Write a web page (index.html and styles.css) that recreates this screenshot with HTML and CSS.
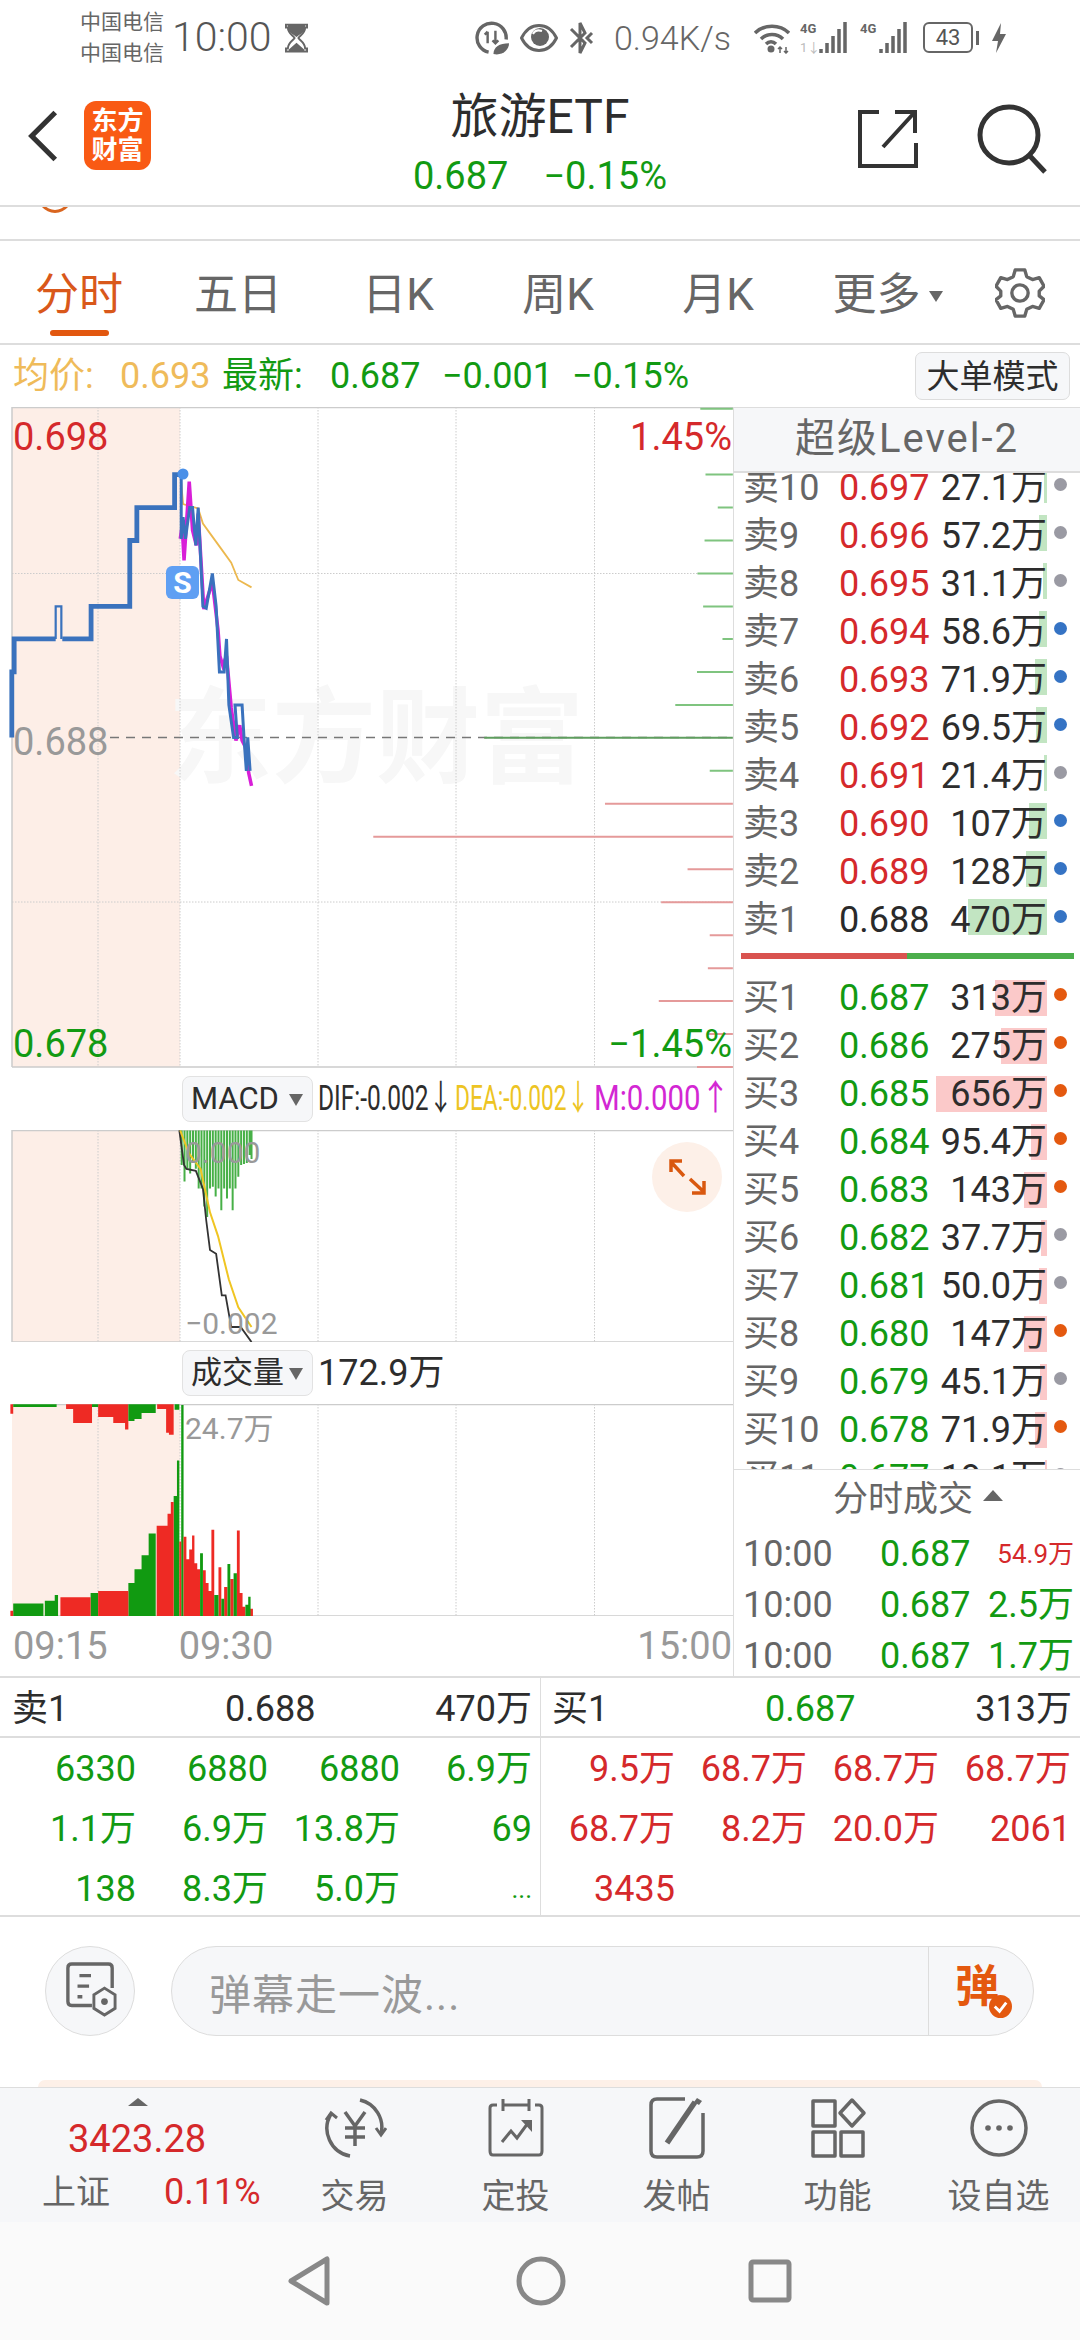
FILE: index.html
```html
<!DOCTYPE html>
<html lang="zh-CN">
<head>
<meta charset="utf-8">
<title>旅游ETF</title>
<link rel="stylesheet" href="styles.css">
</head>
<body>
<div class="page">
  <div class="status">
    <div class="carriers"><span>中国电信</span><span>中国电信</span></div>
    <span class="clock">10:00</span>
    <svg class="st-glass" viewBox="0 0 24 30"><path d="M1 1H23V4H21C21 10 16 12 14 15C16 18 21 20 21 26H23V29H1V26H3C3 20 8 18 10 15C8 12 3 10 3 4H1Z" fill="none" stroke="#666" stroke-width="2"/><path d="M3 1H21V6C19 10 15 11 12 14C9 11 5 10 3 6ZM12 20L20 27V29H4V27Z" fill="#666"/></svg>
    <div class="st-right">
      <svg class="st-i1" viewBox="0 0 36 36"><path d="M32 20A15 15 0 1 0 14 33" fill="none" stroke="#666" stroke-width="3.500"/><path d="M13 12V24M10 15L13 12M21 11V24M18 21L21 24L24 21" fill="none" stroke="#666" stroke-width="2.500"/><path d="M19 35C19 28 25 24 35 24C35 31 28 37 19 35Z" fill="#666"/></svg>
      <svg class="st-i2" viewBox="0 0 38 30"><path d="M1.500 15C6 6 12 2.500 19 2.500S32 6 36.500 15C32 24 26 27.500 19 27.500S6 24 1.500 15Z" fill="none" stroke="#666" stroke-width="3"/><circle cx="20" cy="14" r="9" fill="#666"/><path d="M13 11C15 7 19 7 22 8" fill="none" stroke="#fff" stroke-width="2"/></svg>
      <svg class="st-i3" viewBox="0 0 26 36"><path d="M3 9L12 18L3 27M12 18L17 13L12 3ZM12 18L17 23L12 33ZM24 13L19 18L24 23" fill="none" stroke="#666" stroke-width="3"/></svg>
      <span class="speed">0.94K/s</span>
      <svg class="st-wifi" viewBox="0 0 36 32"><path d="M1 11C10 2 26 2 35 11M7 17C13 11 23 11 29 17M12 22C15 19 19 19 22 22" fill="none" stroke="#666" stroke-width="3.500"/><circle cx="17" cy="27" r="3.500" fill="#666"/><path d="M26 31V25M24 27L26 25L28 27M32 25V31M30 29L32 31L34 29" fill="none" stroke="#666" stroke-width="1.500"/></svg>
      <svg class="st-sig" viewBox="0 0 50 36"><text x="0" y="13" class="st-4g">4G</text><text x="0" y="32" class="st-1">1↓</text><path d="M21 33V29M27 33V23M33 33V16M39 33V9M45 33V2" stroke="#666" stroke-width="3.500"/></svg>
      <svg class="st-sig" viewBox="0 0 50 36"><text x="0" y="13" class="st-4g">4G</text><path d="M21 33V29M27 33V23M33 33V16M39 33V9M45 33V2" stroke="#666" stroke-width="3.500"/></svg>
      <div class="batt"><span class="batt-num">43</span></div><span class="batt-tip"></span>
      <svg class="st-bolt" viewBox="0 0 16 30"><path d="M10 0L1 18H7L5 30L15 11H9Z" fill="#666"/></svg>
    </div>
  </div>

  <header class="head">
    <svg class="back" viewBox="0 0 34 56"><path d="M30 3L5 28L30 53" fill="none" stroke="#333" stroke-width="5.500"/></svg>
    <div class="logo"><span>东方</span><span>财富</span></div>
    <div class="title-box">
      <div class="title">旅游ETF</div>
      <div class="subtitle"><span>0.687</span><span>−0.15%</span></div>
    </div>
    <svg class="share" viewBox="0 0 60 60"><path d="M21 3H2V57H58V34" fill="none" stroke="#333" stroke-width="4"/><path d="M25 38L56 4M37 3H57V24" fill="none" stroke="#333" stroke-width="4"/></svg>
    <svg class="search" viewBox="0 0 72 70"><ellipse cx="32" cy="31" rx="29" ry="28" fill="none" stroke="#333" stroke-width="5"/><path d="M52 51L68 68" stroke="#333" stroke-width="5"/></svg>
  </header>

  <div class="strip"><span class="strip-arc"></span></div>

  <nav class="tabs">
    <div class="tab tab-on">分时<span class="tab-bar"></span></div>
    <div class="tab">五日</div>
    <div class="tab">日K</div>
    <div class="tab">周K</div>
    <div class="tab">月K</div>
    <div class="tab tab-more">更多<span class="tab-caret"></span></div>
    <svg class="gear" viewBox="0 0 52 52"><path d="M21 2H31L33 9L39 12L46 10L51 19L46 24V29L51 33L46 42L39 40L33 43L31 50H21L19 43L13 40L6 42L1 33L6 29V24L1 19L6 10L13 12L19 9Z" fill="none" stroke="#666" stroke-width="3.500" stroke-linejoin="round"/><circle cx="26" cy="26" r="8.500" fill="none" stroke="#666" stroke-width="3.500"/></svg>
  </nav>

  <div class="quote">
    <span class="q-avg q-a">均价:</span><span class="q-avg q-b">0.693</span>
    <span class="q-new q-c">最新:</span><span class="q-new q-d">0.687</span><span class="q-new q-e">−0.001</span><span class="q-new q-f">−0.15%</span>
    <button class="mode">大单模式</button>
  </div>

  <div class="main">
    <div class="charts">
      <svg class="pane pane-price" viewBox="0 407 734 661">
        <rect x="12" y="407" width="168" height="660" fill="#fdeee7"/>
        <text x="168" y="775" class="wm">东方财富</text>
        <path d="M98 407V1067M180 407V1067M318 407V1067M456 407V1067M594.500 407V1067M12 573.500H733M12 902H733" stroke="#ccc" stroke-width="1" stroke-dasharray="1.500 1.500" fill="none"/>
        <path d="M12 407.500H733M12 1067H733M12 407V1067" stroke="#ccc" stroke-width="1.500" fill="none"/>
        <path d="M110 737.500H733" stroke="#777" stroke-width="1.500" stroke-dasharray="9 7" fill="none"/>
        <g transform="translate(0 400) scale(.4719 .4337)">
          <path class="ns" d="M1484 20H1553M1495 172H1553M1521 248H1553M1493 324H1553M1478 400H1553M1490 476H1553M1531 551H1553M1477 627H1553M1431 703H1553M1504 855H1553" stroke="#7fc47f" stroke-width="2" fill="none"/>
          <path class="ns" d="M1282 931H1553M791 1007H1553M1457 1082H1553M1401 1158H1553M1504 1234H1553M1500 1310H1553M1396 1386H1553M1500 1462H1553M1477 1538H1553" stroke="#e59a9a" stroke-width="2" fill="none"/>
          <path class="ns" d="M1026 779H1553" stroke="#5f9e5f" stroke-width="2" fill="none"/>
          <path class="ns" d="M384 190L388 240L420 250L430 285L450 315L470 345L490 375L505 415L533 432" stroke="#ecb84e" stroke-width="1.800" fill="none"/>
          <path class="ns" d="M382 320L386 290L390 370L401 188L408 300L416 335L420 262L432 482L450 420L462 530L466 590L472 612L480 590L490 710L500 785L508 750L513 785L520 800L527 860L533 890" stroke="#d81fd8" stroke-width="3.500" fill="none"/>
          <path class="ns" d="M25 778V627H30V551H118M132 551H193V476H275V324H290V248H370V172H384" stroke="#3a72bd" stroke-width="4.800" fill="none"/>
          <path class="ns" d="M118 551V476H130V551" stroke="#3a72bd" stroke-width="2.200" fill="none"/>
          <path class="ns" d="M384 172V320L388 270L393 320L402 248H408L415 335L420 248L430 476L437 480L450 400L458 476L465 627H475L480 551L485 703L495 778H503L498 703H513L517 778L522 855L525 778L530 855" stroke="#3a72bd" stroke-width="3" fill="none"/>
        </g>
        <circle cx="183" cy="474" r="5.500" fill="#4a90e8"/>
        <rect x="166" y="566" width="33" height="33" rx="6" fill="#5f9ff3"/>
        <text x="182.500" y="593" class="badge-s">S</text>
        <text x="13" y="450" class="ax ax-r">0.698</text>
        <text x="732" y="450" class="ax ax-r ax-end">1.45%</text>
        <text x="13" y="755" class="ax ax-g">0.688</text>
        <text x="13" y="1057" class="ax ax-d">0.678</text>
        <text x="732" y="1057" class="ax ax-d ax-end">−1.45%</text>
      </svg>

      <div class="legend">
        <div class="sel">MACD<span class="sel-caret"></span></div>
        <span class="lg lg-k">DIF:-0.002↓</span>
        <span class="lg lg-y">DEA:-0.002↓</span>
        <span class="lg lg-m">M:0.000↑</span>
      </div>

      <svg class="pane pane-macd" viewBox="0 1130 734 212">
        <rect x="12" y="1130" width="168" height="212" fill="#fdeee7"/>
        <path d="M98 1130V1342M180 1130V1342M318 1130V1342M456 1130V1342M594.500 1130V1342" stroke="#ccc" stroke-dasharray="1.500 1.500" fill="none"/>
        <path d="M12 1130.500H733M12 1342H733M12 1130V1342" stroke="#ccc" stroke-width="1.500" fill="none"/>
        <g transform="translate(0 1070) scale(.4719 .3954)">
          <path class="ns" d="M385 153V240M391 153V282M397 153V250M403 153V262M409 153V235M415 153V250M421 153V300M427 153V300M433 153V345M439 153V372M445 153V300M451 153V295M457 153V320M463 153V300M469 153V355M475 153V300M481 153V325M487 153V300M493 153V355M499 153V300M505 153V270M511 153V240M517 153V238M523 153V235M529 153V215M533 153V225" stroke="#47b047" stroke-width="2" fill="none"/>
          <path class="ns" d="M380 153L390 240L395 250L415 255L430 300L437 380L445 455L458 465L470 570L478 570L490 650L510 650L533 688" stroke="#333" stroke-width="1.800" fill="none"/>
          <path class="ns" d="M382 153L400 210L425 250L445 360L462 420L485 530L505 600L533 650" stroke="#f0c522" stroke-width="2" fill="none"/>
        </g>
        <text x="185" y="1163" class="ax-s">0.000</text>
        <text x="185" y="1334" class="ax-s">−0.002</text>
        <circle cx="687" cy="1177" r="35" fill="#fdf0e8"/>
        <path d="M671 1162L684 1176M671 1172V1161H682M704 1192L690 1179M704 1181V1193H692" stroke="#d9580f" stroke-width="3.500" fill="none"/>
      </svg>

      <div class="legend">
        <div class="sel">成交量<span class="sel-caret"></span></div>
        <span class="lg-vol">172.9万</span>
      </div>

      <svg class="pane pane-vol" viewBox="0 1405 734 212">
        <rect x="12" y="1405" width="168" height="212" fill="#fdeee7"/>
        <path d="M98 1405V1617M180 1405V1617M318 1405V1617M456 1405V1617M594.500 1405V1617" stroke="#ccc" stroke-dasharray="1.500 1.500" fill="none"/>
        <path d="M12 1405.500H733M12 1617H733" stroke="#ccc" stroke-width="1.500" fill="none"/>
        <g transform="translate(0 1070) scale(.4719 .3954)">
          <path fill="#ee2a24" d="M22 848H28V872H22ZM140 848H155V860H140ZM155 848H195V895H155ZM208 848H240V880H208ZM240 848H265V895H240ZM265 848H272V912H265ZM333 848H352V860H333ZM352 848H358V920H352ZM358 848H368V925H358Z"/>
          <path fill="#119a11" d="M28 848H120V855H28ZM195 848H208V855H195ZM272 848H285V890H272ZM285 848H300V885H285ZM300 848H330V870H300ZM370 848H380V862H370Z"/>
          <path fill="#119a11" d="M28 1352H92V1384H28ZM95 1345H122V1384H95ZM116 1330H123V1384H116ZM192 1325H208V1384H192ZM272 1300H285V1384H272ZM285 1265H300V1384H285ZM300 1230H315V1384H300ZM315 1175H330V1384H315ZM368 1080H375V1384H368ZM375 990H380V1384H375ZM384 850H389V1384H384Z"/>
          <path fill="#ee2a24" d="M22 1370H28V1384H22ZM128 1336H192V1384H128ZM208 1320H272V1384H208ZM332 1155H355V1384H332ZM355 1125H362V1384H355ZM362 1095H368V1384H362ZM380 1195H384V1384H380Z"/>
          <path fill="#ee2a24" d="M389 1183H395V1384H389ZM395 1240H401V1384H395ZM401 1215H407V1384H401ZM407 1180H412V1384H407ZM412 1250H418V1384H412ZM418 1265H424V1384H418ZM430 1268H436V1384H430ZM436 1300H442V1384H436ZM442 1320H448V1384H442ZM448 1165H454V1384H448ZM463 1260H469V1384H463ZM475 1310H482V1384H475ZM488 1290H495V1384H488ZM502 1167H508V1384H502ZM508 1325H514V1384H508ZM514 1360H520V1384H514ZM530 1365H536V1384H530Z"/>
          <path fill="#119a11" d="M424 1225H430V1384H424ZM454 1330H463V1384H454ZM469 1340H475V1384H469ZM482 1252H488V1384H482ZM495 1275H502V1384H495ZM520 1355H526V1384H520ZM526 1335H531V1384H526Z"/>
        </g>
        <text x="185" y="1440" class="ax-s">24.7万</text>
      </svg>

      <div class="times"><span>09:15</span><span class="t-mid">09:30</span><span class="t-end">15:00</span></div>
    </div>

    <aside class="side">
      <div class="side-head">超级Level-2</div>
      <div class="levels">
        <div class="lv lv-first"><span class="lv-n">卖10</span><span class="lv-p red">0.697</span><span class="lv-v"><i class="bar bar-s" style="width:3px"></i><b>27.1万</b></span><i class="dot dot-g"></i></div>
        <div class="lv"><span class="lv-n">卖9</span><span class="lv-p red">0.696</span><span class="lv-v"><i class="bar bar-s" style="width:8px"></i><b>57.2万</b></span><i class="dot dot-g"></i></div>
        <div class="lv"><span class="lv-n">卖8</span><span class="lv-p red">0.695</span><span class="lv-v"><i class="bar bar-s" style="width:4px"></i><b>31.1万</b></span><i class="dot dot-g"></i></div>
        <div class="lv"><span class="lv-n">卖7</span><span class="lv-p red">0.694</span><span class="lv-v"><i class="bar bar-s" style="width:8px"></i><b>58.6万</b></span><i class="dot dot-b"></i></div>
        <div class="lv"><span class="lv-n">卖6</span><span class="lv-p red">0.693</span><span class="lv-v"><i class="bar bar-s" style="width:12px"></i><b>71.9万</b></span><i class="dot dot-b"></i></div>
        <div class="lv"><span class="lv-n">卖5</span><span class="lv-p red">0.692</span><span class="lv-v"><i class="bar bar-s" style="width:11px"></i><b>69.5万</b></span><i class="dot dot-b"></i></div>
        <div class="lv"><span class="lv-n">卖4</span><span class="lv-p red">0.691</span><span class="lv-v"><i class="bar bar-s" style="width:3px"></i><b>21.4万</b></span><i class="dot dot-g"></i></div>
        <div class="lv"><span class="lv-n">卖3</span><span class="lv-p red">0.690</span><span class="lv-v"><i class="bar bar-s" style="width:18px"></i><b>107万</b></span><i class="dot dot-b"></i></div>
        <div class="lv"><span class="lv-n">卖2</span><span class="lv-p red">0.689</span><span class="lv-v"><i class="bar bar-s" style="width:21px"></i><b>128万</b></span><i class="dot dot-b"></i></div>
        <div class="lv"><span class="lv-n">卖1</span><span class="lv-p ink">0.688</span><span class="lv-v"><i class="bar bar-s" style="width:79px"></i><b>470万</b></span><i class="dot dot-b"></i></div>
        <div class="ratio"><span class="ratio-r"></span><span class="ratio-g"></span></div>
        <div class="lv"><span class="lv-n">买1</span><span class="lv-p grn">0.687</span><span class="lv-v"><i class="bar bar-b" style="width:52px"></i><b>313万</b></span><i class="dot dot-o"></i></div>
        <div class="lv"><span class="lv-n">买2</span><span class="lv-p grn">0.686</span><span class="lv-v"><i class="bar bar-b" style="width:46px"></i><b>275万</b></span><i class="dot dot-o"></i></div>
        <div class="lv"><span class="lv-n">买3</span><span class="lv-p grn">0.685</span><span class="lv-v"><i class="bar bar-b" style="width:111px"></i><b>656万</b></span><i class="dot dot-o"></i></div>
        <div class="lv"><span class="lv-n">买4</span><span class="lv-p grn">0.684</span><span class="lv-v"><i class="bar bar-b" style="width:16px"></i><b>95.4万</b></span><i class="dot dot-o"></i></div>
        <div class="lv"><span class="lv-n">买5</span><span class="lv-p grn">0.683</span><span class="lv-v"><i class="bar bar-b" style="width:23px"></i><b>143万</b></span><i class="dot dot-o"></i></div>
        <div class="lv"><span class="lv-n">买6</span><span class="lv-p grn">0.682</span><span class="lv-v"><i class="bar bar-b" style="width:6px"></i><b>37.7万</b></span><i class="dot dot-g"></i></div>
        <div class="lv"><span class="lv-n">买7</span><span class="lv-p grn">0.681</span><span class="lv-v"><i class="bar bar-b" style="width:8px"></i><b>50.0万</b></span><i class="dot dot-g"></i></div>
        <div class="lv"><span class="lv-n">买8</span><span class="lv-p grn">0.680</span><span class="lv-v"><i class="bar bar-b" style="width:23px"></i><b>147万</b></span><i class="dot dot-o"></i></div>
        <div class="lv"><span class="lv-n">买9</span><span class="lv-p grn">0.679</span><span class="lv-v"><i class="bar bar-b" style="width:7px"></i><b>45.1万</b></span><i class="dot dot-g"></i></div>
        <div class="lv"><span class="lv-n">买10</span><span class="lv-p grn">0.678</span><span class="lv-v"><i class="bar bar-b" style="width:12px"></i><b>71.9万</b></span><i class="dot dot-o"></i></div>
        <div class="lv"><span class="lv-n">买11</span><span class="lv-p grn">0.677</span><span class="lv-v"><i class="bar bar-b" style="width:2px"></i><b>19.1万</b></span><i class="dot dot-g"></i></div>
      </div>
      <div class="trades">
        <div class="tr-head">分时成交<span class="tr-caret"></span></div>
        <div class="tr"><span class="tr-t">10:00</span><span class="tr-p">0.687</span><span class="tr-v tr-small">54.9万</span></div>
        <div class="tr"><span class="tr-t">10:00</span><span class="tr-p">0.687</span><span class="tr-v">2.5万</span></div>
        <div class="tr"><span class="tr-t">10:00</span><span class="tr-p">0.687</span><span class="tr-v">1.7万</span></div>
      </div>
    </aside>
  </div>

  <section class="book">
    <div class="bk bk-l">
      <div class="bk-top"><span>卖1</span><span>0.688</span><span>470万</span></div>
      <div class="bk-grid grn">
        <span>6330</span><span>6880</span><span>6880</span><span>6.9万</span>
        <span>1.1万</span><span>6.9万</span><span>13.8万</span><span>69</span>
        <span>138</span><span>8.3万</span><span>5.0万</span><span class="bk-more">...</span>
      </div>
    </div>
    <div class="bk bk-r">
      <div class="bk-top"><span>买1</span><span class="grn">0.687</span><span>313万</span></div>
      <div class="bk-grid red">
        <span>9.5万</span><span>68.7万</span><span>68.7万</span><span>68.7万</span>
        <span>68.7万</span><span>8.2万</span><span>20.0万</span><span>2061</span>
        <span>3435</span>
      </div>
    </div>
  </section>

  <section class="composer">
    <div class="round-btn">
      <svg viewBox="0 0 54 62"><path d="M28 46H7Q3 46 3 42V7Q3 3 7 3H45Q49 3 49 7V28" fill="none" stroke="#666" stroke-width="3.500"/><path d="M15 15H27M13 26H25M13 37H18" stroke="#666" stroke-width="3.500"/><path d="M41 28L52 35V49L41 56L30 49V35Z" fill="none" stroke="#666" stroke-width="3"/><circle cx="41" cy="42" r="3.500" fill="#666"/></svg>
    </div>
    <div class="input">
      <span class="ph">弹幕走一波...</span>
      <div class="send"><span class="send-t">弹</span><svg class="send-c" viewBox="0 0 24 24"><circle cx="12" cy="12" r="12" fill="#e4590f"/><path d="M6 12L11 17L18 8" fill="none" stroke="#fff" stroke-width="3"/></svg></div>
    </div>
  </section>
  <div class="peach"></div>

  <nav class="tabbar">
    <div class="idx">
      <span class="idx-caret"></span>
      <div class="idx-val">3423.28</div>
      <div class="idx-row"><span class="idx-n">上证</span><span class="idx-p">0.11%</span></div>
    </div>
    <div class="tb">
      <svg class="tb-i" viewBox="0 0 64 64"><path d="M37 4A28 28 0 0 1 58 38M27 60A28 28 0 0 1 8 18" fill="none" stroke="#666" stroke-width="3.500"/><path d="M3 24L8 17L14 22M53 32L58 39L63 32" fill="none" stroke="#666" stroke-width="3"/><path d="M22 16L32 30L42 16M32 30V50M22 32H42M22 41H42" fill="none" stroke="#666" stroke-width="3.500"/></svg>
      <span>交易</span>
    </div>
    <div class="tb">
      <svg class="tb-i" viewBox="0 0 64 64"><path d="M13 9H9Q6 9 6 12V55Q6 59 9 59H55Q58 59 58 55V12Q58 9 55 9H51M19 9H45M19 3V15M45 3V15" fill="none" stroke="#666" stroke-width="3"/><path d="M18 46L27 35L33 42L44 27" fill="none" stroke="#666" stroke-width="3"/><path d="M37 24H48V36Z" fill="#666"/></svg>
      <span>定投</span>
    </div>
    <div class="tb">
      <svg class="tb-i" viewBox="0 0 64 64"><path d="M40 3H12Q6 3 6 9V55Q6 61 12 61H52Q58 61 58 55V17" fill="none" stroke="#666" stroke-width="3.500"/><path d="M22 47L50 6" stroke="#666" stroke-width="5.500"/><path d="M52 2L57 5L54 9L49 6Z" fill="#666"/></svg>
      <span>发帖</span>
    </div>
    <div class="tb">
      <svg class="tb-i" viewBox="0 0 64 64"><path d="M7 5H29V30H7ZM7 36H29V60H7ZM35 36H57V60H35Z" fill="none" stroke="#666" stroke-width="3.500" stroke-linejoin="round"/><path d="M46 4L58 17L46 30L34 17Z" fill="none" stroke="#666" stroke-width="3.500" stroke-linejoin="round"/></svg>
      <span>功能</span>
    </div>
    <div class="tb">
      <svg class="tb-i" viewBox="0 0 64 64"><circle cx="32" cy="32" r="27" fill="none" stroke="#666" stroke-width="3.500"/><circle cx="21" cy="32" r="2.800" fill="#666"/><circle cx="32" cy="32" r="2.800" fill="#666"/><circle cx="43" cy="32" r="2.800" fill="#666"/></svg>
      <span>设自选</span>
    </div>
  </nav>

  <div class="sysnav">
    <svg class="sn-tri" viewBox="0 0 42 50"><path d="M39 3V47L3 25Z" fill="none" stroke="#888" stroke-width="5" stroke-linejoin="round"/></svg>
    <svg class="sn-cir" viewBox="0 0 50 50"><circle cx="25" cy="25" r="22" fill="none" stroke="#888" stroke-width="5"/></svg>
    <svg class="sn-sq" viewBox="0 0 44 44"><rect x="3" y="3" width="38" height="38" rx="2" fill="none" stroke="#888" stroke-width="5"/></svg>
  </div>
</div>
</body>
</html>
```

FILE: styles.css
```css
* { box-sizing: border-box; }
html, body { margin: 0; padding: 0; background: #fff; }
body { font-family: Roboto, "Noto Sans CJK SC", sans-serif; color: #333; }
.page { width: 1080px; height: 2340px; overflow: hidden; display: flex; flex-direction: column; }
.red { color: #d5292b; }
.grn { color: #129a12; }
.ink { color: #2a2a2a; }

/* status */
.status { height: 70px; flex: none; display: flex; align-items: center; padding-left: 80px; color: #666; }
.carriers { display: flex; flex-direction: column; font-size: 21px; line-height: 31px; width: 92px; margin-top: 5px; }
.clock { font-size: 41px; font-weight: 300; line-height: 1; color: #555; margin-top: 5px; width: 100px; flex: none; white-space: nowrap; }
.st-glass { width: 23px; height: 30px; margin-left: 13px; margin-top: 5px; flex: none; }
.st-right { display: flex; align-items: center; margin-left: 167px; margin-top: 5px; }
.st-i1 { width: 35px; height: 35px; flex: none; }
.st-i2 { width: 38px; height: 30px; margin-left: 10px; flex: none; }
.st-i3 { width: 26px; height: 36px; margin-left: 10px; flex: none; }
.speed { font-size: 34px; line-height: 40px; font-weight: 300; margin-left: 20px; width: 119px; flex: none; white-space: nowrap; }
.st-wifi { width: 36px; height: 32px; margin-left: 21px; flex: none; }
.st-sig { width: 50px; height: 36px; margin-left: 10px; flex: none; }
.st-4g { font-size: 13px; font-weight: 700; fill: #666; }
.st-1 { font-size: 13px; fill: #bbb; }
.batt { width: 50px; height: 31px; margin-left: 13px; border: 2.500px solid #666; border-radius: 6px; display: flex; align-items: center; justify-content: center; flex: none; }
.batt-num { font-size: 22px; line-height: 1; color: #555; }
.batt-tip { width: 3px; height: 14px; background: #666; margin-left: 3px; flex: none; }
.st-bolt { width: 16px; height: 30px; margin-left: 12px; flex: none; }

/* header */
.head { height: 137px; flex: none; display: flex; align-items: center; position: relative; border-bottom: 2px solid #ddd; padding-left: 27px; }
.back { width: 32px; height: 54px; margin-top: -4px; }
.logo { width: 67px; height: 69px; margin-left: 25px; margin-top: -4px; background: #f95a14; border-radius: 12px; color: #fff; font-size: 26px; font-weight: 700; line-height: 29px; display: flex; flex-direction: column; align-items: center; justify-content: center; }
.title-box { position: absolute; left: 0; right: 0; top: 20px; text-align: center; pointer-events: none; }
.title { font-size: 48px; line-height: 54px; color: #2d2d2d; }
.subtitle { font-size: 38px; line-height: 46px; color: #129a12; display: flex; justify-content: center; gap: 35px; margin-top: 9px; }
.share { width: 60px; height: 60px; position: absolute; left: 858px; top: 39px; }
.search { width: 72px; height: 70px; position: absolute; left: 977px; top: 34px; }

.strip { height: 34px; flex: none; border-bottom: 2px solid #ddd; position: relative; overflow: hidden; }
.strip-arc { position: absolute; left: 36px; top: -38px; width: 38px; height: 44px; border: 3px solid #d9651f; border-radius: 50%; }

/* tabs */
.tabs { height: 104px; flex: none; display: flex; border-bottom: 2px solid #ddd; position: relative; }
.tab { width: 160px; text-align: center; font-size: 44px; line-height: 50px; padding-top: 29px; color: #666; position: relative; }
.tab-on { color: #d9581a; width: 158px; }
.tab-bar { position: absolute; left: 50px; top: 89px; width: 59px; height: 6px; border-radius: 3px; background: #e2570f; }
.tab-more { padding-left: 15px; margin-left: 2px; white-space: nowrap; }
.tab-caret { display: inline-block; width: 0; height: 0; border: 7.500px solid transparent; border-top: 11px solid #666; border-bottom: 0; margin-left: 8px; vertical-align: 8px; }
.gear { width: 50px; height: 52px; margin-left: 35px; margin-top: 26px; }

/* quote */
.quote { height: 62px; flex: none; display: flex; align-items: center; font-size: 36px; line-height: 62px; padding-left: 13px; position: relative; white-space: nowrap; }
.q-avg { color: #efbb5a; }
.q-new { color: #129a12; }
.q-a { width: 107px; }
.q-b { width: 102px; }
.q-c { width: 108px; }
.q-d { width: 112px; }
.q-e { width: 130px; }
.mode { position: absolute; left: 915px; top: 7px; width: 155px; height: 48px; padding: 0; background: #f6f7f9; border: 1.500px solid #ddd; border-radius: 7px; font: inherit; font-size: 33px; color: #2d2d2d; line-height: 1; }

/* main */
.main { flex: none; height: 1271px; display: flex; border-bottom: 2px solid #ddd; }
.charts { width: 734px; flex: none; display: flex; flex-direction: column; border-right: 1.500px solid #ddd; }
.pane { display: block; width: 734px; flex: none; }
.pane-price { height: 661px; }
.pane-macd, .pane-vol { height: 212px; }
.ns { vector-effect: non-scaling-stroke; }
.wm { font-size: 104px; font-weight: 700; fill: #f7f7f7; }
.ax { font-size: 38px; }
.ax-r { fill: #d5292b; }
.ax-g { fill: #999; }
.ax-d { fill: #129a12; }
.ax-end { text-anchor: end; }
.ax-s { font-size: 30px; fill: #999; }
.badge-s { font-size: 30px; font-weight: 700; fill: #fff; text-anchor: middle; }

.legend { height: 63px; flex: none; display: flex; align-items: center; padding-left: 182px; white-space: nowrap; margin-top: -1px; line-height: 46px; }
.sel { width: 131px; height: 46px; background: #f6f7f9; border: 1.500px solid #e2e2e2; border-radius: 8px; font-size: 31px; line-height: 43px; color: #2d2d2d; padding-left: 8px; position: relative; flex: none; }
.sel-caret { position: absolute; right: 9px; top: 17px; width: 0; height: 0; border: 7.500px solid transparent; border-top: 12px solid #666; border-bottom: 0; }
.lg { font-size: 35px; display: block; transform-origin: left center; flex: none; }
.lg-k { color: #2d2d2d; width: 137px; margin-left: 5px; transform: scaleX(.7); }
.lg-y { color: #edc423; width: 139px; transform: scaleX(.65); }
.lg-m { color: #d327d3; width: 128px; transform: scaleX(.84); }
.lg-vol { font-size: 36px; color: #2d2d2d; margin-left: 5px; }

.times { height: 61px; flex: none; display: flex; font-size: 38px; color: #999; line-height: 60px; padding-left: 13px; position: relative; }
.t-mid { margin-left: 71px; }
.t-end { margin-left: auto; padding-right: 1px; }

/* side */
.side { flex: 1; display: flex; flex-direction: column; min-width: 0; }
.side-head { height: 66px; flex: none; background: #f6f7f9; border-bottom: 2px solid #ddd; border-top: 1.500px solid #ddd; font-size: 40px; line-height: 62px; color: #666; text-align: center; letter-spacing: 2px; white-space: nowrap; }
.levels { height: 996px; flex: none; overflow: hidden; }
.lv { height: 48px; display: flex; align-items: center; padding-left: 9px; font-size: 36px; line-height: 48px; }
.lv-first { margin-top: -9px; }
.lv-n { width: 96px; color: #666; }
.lv-p { width: 97px; }
.lv-v { width: 111px; text-align: right; position: relative; display: block; height: 48px; line-height: 48px; padding-right: 0; white-space: nowrap; }
.lv-v b { font-weight: 400; color: #2d2d2d; position: relative; }
.bar { position: absolute; right: 0; top: 3px; height: 36px; }
.bar-s { background: #c2e5c2; }
.bar-b { background: #fbc9c9; top: 6px; }
.dot { width: 13px; height: 13px; border-radius: 50%; margin-left: 7px; margin-top: -8px; flex: none; }
.dot-g { background: #9a9aa3; }
.dot-b { background: #3573c4; }
.dot-o { background: #e4590f; }
.ratio { height: 30px; padding: 9px 6px 15px 7px; display: flex; }
.ratio-r { width: 166px; background: #d9534f; }
.ratio-g { flex: 1; background: #4cae4c; }

.trades { flex: 1; border-top: 1.500px solid #ddd; }
.tr-head { height: 59px; font-size: 35px; line-height: 59px; color: #666; text-align: center; padding-left: 22px; white-space: nowrap; }
.tr-caret { display: inline-block; width: 0; height: 0; border: 10px solid transparent; border-bottom: 11px solid #666; border-top: 0; margin-left: 10px; vertical-align: 10px; }
.tr { height: 51px; display: flex; align-items: center; padding: 0 6px 0 9px; font-size: 36px; line-height: 51px; }
.tr-t { width: 137px; color: #666; }
.tr-p { color: #129a12; }
.tr-v { margin-left: auto; color: #129a12; }
.tr-small { font-size: 26px; color: #d5292b; }

/* book */
.book { height: 239px; flex: none; display: flex; border-bottom: 2px solid #ddd; line-height: 62px; }
.bk { flex: none; }
.bk-l { width: 541px; border-right: 1px solid #ddd; padding-left: 4px; }
.bk-r { width: 539px; padding-left: 2px; }
.bk-top { height: 60px; display: grid; grid-template-columns: 213px 1fr auto; font-size: 36px; color: #2d2d2d; border-bottom: 2px solid #ddd; }
.bk-l .bk-top { margin-left: -4px; padding: 0 8px 0 12px; }
.bk-r .bk-top { margin-left: -2px; padding: 0 8px 0 11px; }
.bk-grid { display: grid; grid-template-columns: repeat(4, 132px); grid-auto-rows: 60px; font-size: 36px; text-align: right; white-space: nowrap; }
.bk-more { font-size: 26px; }

/* composer */
.composer { height: 163px; flex: none; display: flex; padding: 29px 0 0 45px; }
.round-btn { width: 90px; height: 90px; border-radius: 50%; background: #f6f7f9; border: 1.500px solid #ddd; display: flex; align-items: center; justify-content: center; }
.round-btn svg { width: 52px; height: 60px; margin-left: 2px; }
.input { width: 863px; height: 90px; margin-left: 36px; border-radius: 45px; background: #f6f7f9; border: 1.500px solid #ddd; display: flex; align-items: center; padding-left: 37px; overflow: hidden; }
.ph { font-size: 42px; letter-spacing: 1px; color: #999; width: 719px; white-space: nowrap; flex: none; }
.send { flex: 1; height: 100%; border-left: 1.500px solid #ddd; position: relative; }
.send-t { position: absolute; left: 26px; top: 14px; font-size: 44px; font-weight: 700; line-height: 52px; color: #e4590f; }
.send-c { position: absolute; left: 60px; top: 48px; width: 23px; height: 23px; }
.peach { height: 7px; flex: none; margin: 0 38px 0 38px; background: #fdf0e8; border-radius: 14px 14px 0 0; }

/* tabbar */
.tabbar { height: 135px; flex: none; background: #f6f7f9; border-top: 1.500px solid #ddd; display: flex; }
.idx { width: 274px; flex: none; position: relative; padding-left: 42px; }
.idx-caret { position: absolute; left: 128px; top: 10px; width: 0; height: 0; border: 10px solid transparent; border-bottom: 8px solid #666; border-top: 0; }
.idx-val { font-size: 38px; line-height: 44px; color: #d5292b; margin-top: 29px; margin-left: 26px; }
.idx-row { display: flex; font-size: 36px; line-height: 46px; margin-top: 8px; white-space: nowrap; }
.idx-n { font-size: 34px; width: 122px; color: #666; }
.idx-p { color: #d5292b; }
.tb { width: 161px; flex: none; display: flex; flex-direction: column; align-items: center; font-size: 34px; line-height: 44px; color: #666; padding-top: 8px; white-space: nowrap; }
.tb-i { width: 64px; height: 64px; margin-bottom: 14px; flex: none; }

/* sys nav */
.sysnav { flex: 1; background: #fafafa; display: flex; align-items: center; padding: 0 0 0 288px; }
.sn-tri { width: 42px; height: 50px; flex: none; }
.sn-cir { width: 50px; height: 50px; margin-left: 186px; flex: none; }
.sn-sq { width: 44px; height: 44px; margin-left: 182px; flex: none; }
```
